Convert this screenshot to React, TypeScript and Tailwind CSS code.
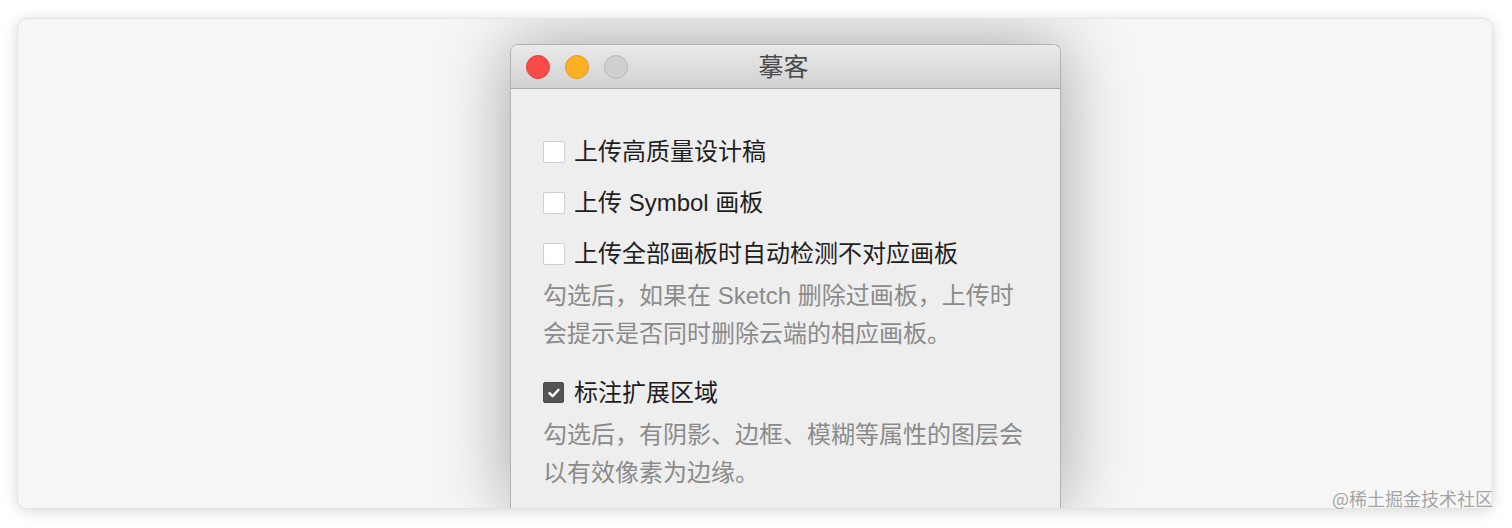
import React from "react";

const font = { fontFamily: '"Liberation Sans", "Noto Sans CJK SC", sans-serif' };

function Box({ checked }: { checked?: boolean }) {
  if (checked) {
    return (
      <div className="w-[21px] h-[21px] shrink-0 rounded-[2px] bg-[#545454] border border-[#4a4a4a] flex items-center justify-center">
        <svg width="14" height="14" viewBox="0 0 14 14">
          <path d="M2.5 7.2 L5.6 10.2 L11.5 3.8" fill="none" stroke="#fff" strokeWidth="2.4" strokeLinecap="round" strokeLinejoin="round" />
        </svg>
      </div>
    );
  }
  return <div className="w-[22px] h-[22px] shrink-0 rounded-[2px] bg-white border border-[#cfcfcf]" />;
}

function Row({ label, checked }: { label: string; checked?: boolean }) {
  return (
    <div className="flex items-center h-[51px] gap-[9px]">
      <Box checked={checked} />
      <span className={"text-[24px] leading-[51px] text-[#1e1e1e]" + (checked ? " ml-[1px]" : "")}>{label}</span>
    </div>
  );
}

function Desc({ lines }: { lines: string[] }) {
  return (
    <div className="-mt-[2px] text-[24px] leading-[38px] text-[#8b8b8b]">
      {lines.map((l) => (
        <div key={l}>{l}</div>
      ))}
    </div>
  );
}

export default function App() {
  return (
    <div className="relative w-[1512px] h-[528px] bg-white pt-[18px] pl-[17px] pr-[19px] pb-[19px]" style={font}>
      <div className="h-[491px] rounded-[10px] bg-[#f6f6f6] border border-[#e4e4e4] shadow-[0_2px_14px_rgba(0,0,0,0.16)] overflow-hidden flex flex-col pt-[25px]">
        <div className="ml-[492px] w-[551px] flex-1 flex flex-col rounded-t-[8px] border border-[#b3b3b3] border-b-0 shadow-[0_0_70px_rgba(0,0,0,0.34)] overflow-hidden">
          <div className="relative h-[44px] shrink-0 bg-gradient-to-b from-[#e9e9e9] to-[#d2d2d2] border-b border-[#a9a9a9] flex items-center">
            <div className="flex items-center gap-[15px] pl-[15px]">
              <div className="w-[24px] h-[24px] rounded-full bg-[#fc4a48] border border-[#e0403e]" />
              <div className="w-[24px] h-[24px] rounded-full bg-[#fdb024] border border-[#e09c22]" />
              <div className="w-[24px] h-[24px] rounded-full bg-[#cfcfcf] border border-[#b8b8b8]" />
            </div>
            <div className="absolute inset-0 flex items-center justify-center pr-[4px] pt-[2px] text-[25px] text-[#4b4b4b]">摹客</div>
          </div>
          <div className="flex-1 bg-[#eeeeee] pl-[32px] pt-[37px]">
            <Row label="上传高质量设计稿" />
            <Row label="上传 Symbol 画板" />
            <Row label="上传全部画板时自动检测不对应画板" />
            <Desc lines={["勾选后，如果在 Sketch 删除过画板，上传时", "会提示是否同时删除云端的相应画板。"]} />
            <div className="h-[14px]" />
            <Row label="标注扩展区域" checked />
            <Desc lines={["勾选后，有阴影、边框、模糊等属性的图层会", "以有效像素为边缘。"]} />
          </div>
        </div>
      </div>
      <div className="absolute right-[19px] bottom-[19px] text-[18px] leading-[22px] text-[#a3a3a3] [text-shadow:0_0_2px_#fff]" style={{ fontFamily: '"Noto Sans CJK SC", sans-serif' }}>
        @稀土掘金技术社区
      </div>
    </div>
  );
}
